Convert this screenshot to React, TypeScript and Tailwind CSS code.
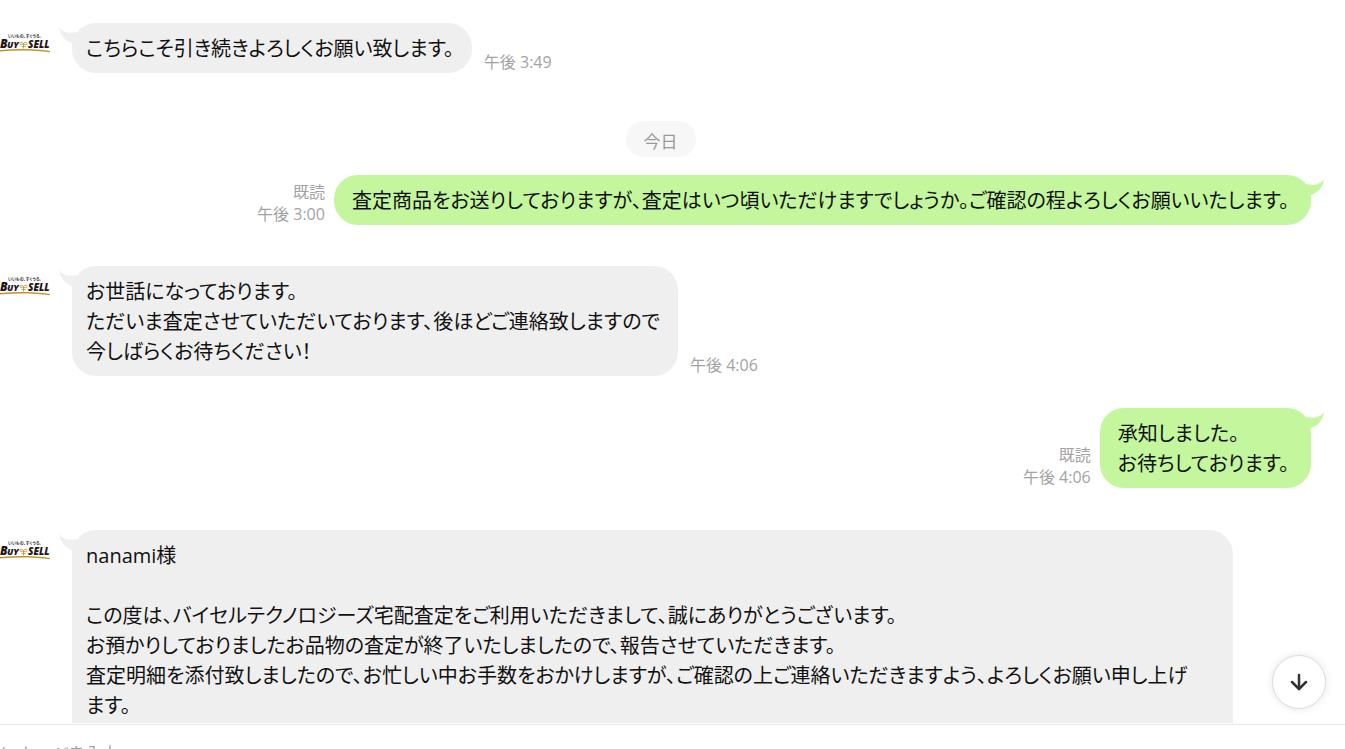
import { ArrowDown } from 'lucide-react'
import { clsx } from 'clsx'

interface Message {
  id: number
  from: 'shop' | 'me'
  time: string
  lines: string[]
  gap: string
}

const EARLIER: Message[] = [
  { id: 1, from: 'shop', time: '午後 3:49', gap: '', lines: ['こちらこそ引き続きよろしくお願い致します。'] },
]

const TODAY: Message[] = [
  {
    id: 2,
    from: 'me',
    time: '午後 3:00',
    gap: 'mt-[18px]',
    lines: ['査定商品をお送りしておりますが、査定はいつ頃いただけますでしょうか。ご確認の程よろしくお願いいたします。'],
  },
  {
    id: 3,
    from: 'shop',
    time: '午後 4:06',
    gap: 'mt-[41px]',
    lines: [
      'お世話になっております。',
      'ただいま査定させていただいております、後ほどご連絡致しますので',
      '今しばらくお待ちください！',
    ],
  },
  { id: 4, from: 'me', time: '午後 4:06', gap: 'mt-8', lines: ['承知しました。', 'お待ちしております。'] },
  {
    id: 5,
    from: 'shop',
    time: '午後 4:30',
    gap: 'mt-[42px]',
    // \u2060 keeps ます from being split over two lines
    lines: [
      'nanami様',
      '',
      'この度は、バイセルテクノロジーズ宅配査定をご利用いただきまして、誠にありがとうございます。',
      'お預かりしておりましたお品物の査定が終了いたしましたので、報告させていただきます。',
      '査定明細を添付致しましたので、お忙しい中お手数をおかけしますが、ご確認の上ご連絡いただきますよう、よろしくお願い申し上げま\u2060す。',
      '',
      '',
    ],
  },
]

function Logo() {
  return (
    <svg viewBox="0 0 52 22" className="block h-[22px] w-[52px]" role="img" aria-label="BUY SELL">
      <text x="8" y="4" fontSize="4" fontWeight="700" fill="#333" fontFamily="'Noto Sans CJK JP', sans-serif">
        いいもの、すぐうる。
      </text>
      <g fill="#1d1718" fontWeight="800" fontStyle="italic" fontFamily="'Open Sans', sans-serif">
        <text x="0" y="14" fontSize="12">B</text>
        <text x="7" y="14" fontSize="9">UY</text>
        <text x="28" y="14" fontSize="10">SELL</text>
      </g>
      <g fill="none" stroke="#c9a04a" strokeWidth="1">
        <path d="M23.500 14.500V9M23.500 10c-1-2.500-3.500-2-3.500-.5s2 1.500 3.500.5c1-2.500 3.500-2 3.500-.5s-2 1.500-3.500.5M21.500 12.500h4" />
      </g>
      <path d="M0 16C16 14.500 34 14.500 50 17V18.300C34 16 16 16 0 17.500Z" fill="#c2932f" />
    </svg>
  )
}

function Tail({ mine }: { mine: boolean }) {
  return (
    <svg
      viewBox="0 0 24 22"
      aria-hidden="true"
      className={clsx('absolute top-1 h-[22px] w-6', mine ? '-right-[13px] -scale-x-100 fill-[#c3f69d]' : '-left-[13px] fill-[#efefef]')}
    >
      <path d="M0 0C3 5 10 7 18 5L24 14L13 16C6 14 1 8 0 0Z" />
    </svg>
  )
}

function MessageRow({ message }: { message: Message }) {
  const mine = message.from === 'me'
  return (
    <li className={clsx('flex items-end', message.gap, mine ? 'flex-row-reverse pr-[34px]' : 'pr-8')}>
      {!mine && (
        <div className="mr-5 w-[52px] flex-shrink-0 self-start pt-[11px]">
          <Logo />
        </div>
      )}
      <div
        className={clsx(
          'relative min-w-0 rounded-[24px] pb-[9px] pt-[11px] text-[20px] leading-[30px] text-[#111]',
          mine ? 'bg-[#c3f69d] pl-[18px] pr-[22px]' : 'bg-[#efefef] pl-[14px] pr-[18px]'
        )}
      >
        <Tail mine={mine} />
        {message.lines.map((line, i) => (
          <p key={i} className="min-h-[30px]">{line}</p>
        ))}
      </div>
      <div className={clsx('flex-shrink-0 text-base leading-[22px] text-[#a3a3a3]', mine ? 'mr-[9px] text-right' : 'ml-3')}>
        {mine && <p>既読</p>}
        <time>{message.time}</time>
      </div>
    </li>
  )
}

export default function App() {
  return (
    <div className="flex h-screen flex-col overflow-hidden bg-white font-['Open_Sans','Noto_Sans_CJK_JP',sans-serif] [font-feature-settings:'palt']">
      <main className="relative min-h-0 flex-1 overflow-hidden border-b border-white pt-[23px]">
        <ul>
          {EARLIER.map(m => <MessageRow key={m.id} message={m} />)}
        </ul>
        <div className="ml-[-24px] mt-12 flex justify-center">
          <span className="rounded-[18px] bg-[#f7f7f7] px-[18px] pb-[3px] pt-[9px] text-[17px] leading-6 text-[#999]">今日</span>
        </div>
        <ul>
          {TODAY.map(m => <MessageRow key={m.id} message={m} />)}
        </ul>
        <button
          aria-label="最新のメッセージへ"
          className="absolute bottom-[14px] right-[19px] flex h-[54px] w-[54px] items-center justify-center rounded-full border border-[#ddd] bg-white text-[#333] shadow-[0_0_8px_rgba(0,0,0,0.1)]"
        >
          <ArrowDown className="h-6 w-6" strokeWidth={2.5} />
        </button>
      </main>
      <footer className="h-[25px] flex-shrink-0 overflow-hidden border-t border-[#e8e8e8] pt-[17px]">
        <input
          type="text"
          aria-label="メッセージ"
          placeholder="メッセージを入力"
          className="-ml-2 block w-full text-[17px] leading-6 outline-none placeholder:text-[#a3a3a3]"
        />
      </footer>
    </div>
  )
}
